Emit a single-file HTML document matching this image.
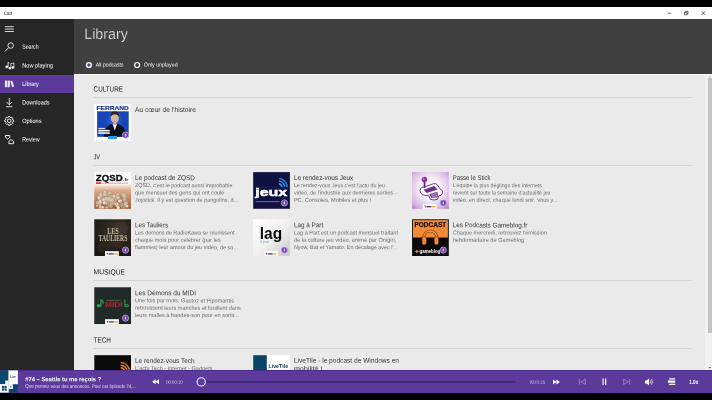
<!DOCTYPE html>
<html><head><meta charset="utf-8"><title>Cast</title>
<style>
*{box-sizing:border-box;margin:0;padding:0}
html,body{width:712px;height:400px;overflow:hidden;background:#000;font-family:"Liberation Sans",sans-serif}
#root{position:absolute;left:0;top:0;width:712px;height:400px;overflow:hidden;will-change:transform}
.a{position:absolute}
.t{position:absolute;left:0;top:0;white-space:nowrap;transform-origin:0 0;display:block}
svg{position:absolute;left:0;top:0;overflow:visible}
svg text{font-family:"Liberation Sans",sans-serif}
</style></head><body>
<div id="root">
<div class="a" style="left:0;top:0;width:712px;height:6.75px;background:#000"></div>
<div class="a" style="left:0;top:6.75px;width:712px;height:12.25px;background:#fff"></div>
<div class="a" id="side" style="left:0;top:19px;width:73.8px;height:352px;background:#262626"></div>
<div class="a" id="sel" style="left:0;top:74.6px;width:73.8px;height:18.5px;background:#5b3a9c"></div>
<div class="a" id="head" style="left:73.8px;top:19px;width:638.2px;height:55.3px;background:#404040"></div>
<div class="a" id="cont" style="left:73.8px;top:74.3px;width:638.2px;height:297px;background:#eaeaea"></div>
<div class="a" style="left:73.8px;top:74.3px;width:638.2px;height:0.8px;background:#f8f8f8"></div>
<!-- separators -->
<div class="a" style="left:93px;top:96.8px;width:599px;height:1px;background:#d4d4d4"></div>
<div class="a" style="left:93px;top:164.7px;width:599px;height:1px;background:#d4d4d4"></div>
<div class="a" style="left:93px;top:279.7px;width:599px;height:1px;background:#d4d4d4"></div>
<div class="a" style="left:93px;top:347.6px;width:599px;height:1px;background:#d4d4d4"></div>
<!-- scrollbar -->
<div class="a" style="left:705px;top:75px;width:7px;height:296px;background:#f1f1f1"></div>
<div class="a" style="left:708px;top:78.4px;width:3.6px;height:254.4px;background:#c3c3c3"></div>

<svg width="712" height="400" viewBox="0 0 712 400" id="g1">
<!-- window controls -->
<g stroke="#333" stroke-width="0.7" fill="none">
<path d="M667.6 13.2H671.4"/>
<path d="M684.4 12.2H687V14.8H684.4Z M685.4 12.2V11.3H688V13.9H687"/>
<path d="M701.6 11.3L705.2 14.9M705.2 11.3L701.6 14.9"/>
</g>
<!-- sidebar icons -->
<g stroke="#f4f4f4" stroke-width="0.85" fill="none" stroke-linecap="butt">
<path d="M4.8 26.7H13.8M4.8 29.1H13.8M4.8 31.5H13.8"/>
<circle cx="10.7" cy="45.5" r="2.75"/>
<path d="M8.7 47.6L5 51.4" stroke-width="1"/>
<!-- music -->
<g stroke-width="0.75">
<path d="M8.1 66.6V62.2L9.4 63.6"/>
<ellipse cx="6.9" cy="66.8" rx="1.25" ry="1" fill="#f4f4f4"/>
<path d="M10.9 68V63.6L13.9 63V67.3"/>
<ellipse cx="9.9" cy="68.2" rx="1.1" ry="0.9" fill="#f4f4f4"/>
<ellipse cx="12.9" cy="67.5" rx="1.1" ry="0.9" fill="#f4f4f4"/>
</g>
<!-- library -->
<g fill="#efe8fa" stroke="none">
<rect x="4.9" y="80.6" width="2.2" height="6.6"/>
<rect x="7.6" y="80.6" width="2.2" height="6.6"/>
<path d="M10.2 81.3L12.1 80.6L14.1 86.6L12.2 87.3Z"/>
</g>
<!-- download -->
<path d="M9.25 98V104.6M6.5 102L9.25 104.8L12 102M6.1 106.7H12.4"/>
<!-- gear -->
<g stroke="#ececec" stroke-width="0.95">
<path d="M8.48,116.36 L9.92,116.36 L10.06,117.30 L11.07,117.72 L11.83,117.15 L12.85,118.17 L12.28,118.93 L12.70,119.94 L13.64,120.08 L13.64,121.52 L12.70,121.66 L12.28,122.67 L12.85,123.43 L11.83,124.45 L11.07,123.88 L10.06,124.30 L9.92,125.24 L8.48,125.24 L8.34,124.30 L7.33,123.88 L6.57,124.45 L5.55,123.43 L6.12,122.67 L5.70,121.66 L4.76,121.52 L4.76,120.08 L5.70,119.94 L6.12,118.93 L5.55,118.17 L6.57,117.15 L7.33,117.72 L8.34,117.30 Z"/>
<circle cx="9.2" cy="120.8" r="1.8"/>
</g>
<!-- review -->
<g stroke-width="0.95" stroke-linejoin="round">
<path d="M5.4 135.5H9.8V137.2L7.8 139.2L5.4 137.2Z"/>
<path d="M8.9 141.4L10.9 139.5L13.6 141.4V143.7H8.9Z"/>
</g>
</g>
<!-- radios -->
<circle cx="88.9" cy="65" r="2.4" fill="#5b3a9c" stroke="#fff" stroke-width="1.4"/>
<circle cx="137.1" cy="65" r="2.5" fill="none" stroke="#fff" stroke-width="1.2"/>
<path d="M708.5 77.3L709.8 75.9L711.1 77.3Z" fill="#a8a8a8"/><path d="M708.5 367L709.8 368.4L711.1 367Z" fill="#5a5a5a"/>
<defs>
<linearGradient id="zq" x1="0" y1="0" x2="0" y2="1"><stop offset="0.3" stop-color="#ffffff"/><stop offset="0.5" stop-color="#dcaa8a"/><stop offset="1" stop-color="#a25a38"/></linearGradient>
<radialGradient id="ps" cx="0.5" cy="0.45" r="0.78"><stop offset="0" stop-color="#ffffff"/><stop offset="0.42" stop-color="#f4eaf7"/><stop offset="0.75" stop-color="#d7b4e2"/><stop offset="1" stop-color="#a468b8"/></radialGradient>
<linearGradient id="lg" x1="0" y1="0" x2="1" y2="1"><stop offset="0" stop-color="#ffffff"/><stop offset="0.5" stop-color="#f1f1f1"/><stop offset="1" stop-color="#c9c9c9"/></linearGradient>
<radialGradient id="tl" cx="0.6" cy="0.35" r="0.7"><stop offset="0" stop-color="#3e3629"/><stop offset="1" stop-color="#191714"/></radialGradient>
<g id="badge"><circle r="3.1" fill="#6b3fa8" stroke="#cdb8ec" stroke-width="0.7"/><rect x="-0.7" y="-1.5" width="1.4" height="3" rx="0.5" fill="#d9c8f0"/></g>
<g id="kawa"><rect x="-0.2" y="-1" width="13.8" height="4.8" fill="#ffffff"/><path d="M1.2 0.6L3 0.9L2.4 2.9Z" fill="#7a2f9a"/><rect x="3.5" y="1" width="5" height="1.4" fill="#5a3a7a"/><rect x="8.9" y="1" width="3.6" height="1.4" fill="#f0b030"/></g>
<radialGradient id="fg" cx="0.5" cy="0.5" r="0.5"><stop offset="0" stop-color="#2f6ae4"/><stop offset="1" stop-color="#1846ba"/></radialGradient>
</defs>
<!-- Ferrand -->
<g transform="translate(94.3,104.3)">
<rect width="36.6" height="36.6" fill="#ffffff"/>
<rect x="2.8" y="7" width="31.6" height="25.5" fill="#1846ba"/>
<circle cx="20" cy="16.5" r="9" fill="url(#fg)"/>
<text x="2.2" y="6" font-size="5" font-weight="bold" fill="#16328e" stroke="#16328e" stroke-width="0.15" textLength="32.2" lengthAdjust="spacingAndGlyphs">FERRAND</text>
<path d="M9.5 32.5Q10.5 22 17.4 19.8L20.5 23.4L23.6 19.8Q31.4 22 32.4 32.5Z" fill="#0e101a"/>
<path d="M18.5 19.6L20.5 26.4L22.6 19.6Z" fill="#f2f3f8"/>
<rect x="18.8" y="16.5" width="3.5" height="4" fill="#c79c86"/>
<ellipse cx="20.5" cy="13.4" rx="4.1" ry="5.3" fill="#dcb49c"/>
<path d="M16.3 12.4Q16.2 7.2 20.5 7.3Q24.9 7.2 24.7 12.4Q23.6 9.8 20.5 9.9Q17.4 9.8 16.3 12.4Z" fill="#2e221c"/>
<path d="M18 16.2Q20.5 18.2 23 16.2Q20.5 19.6 18 16.2Z" fill="#b98a74"/>
<rect x="4" y="23.6" width="6.6" height="1.1" fill="#cfdcf8"/><rect x="4" y="25.6" width="11.4" height="1.6" fill="#f3f6ff"/><rect x="4" y="28" width="11.4" height="1.6" fill="#f3f6ff"/>
<rect x="13.6" y="31.7" width="9.2" height="3.3" rx="1.2" fill="#2a9ae8"/>
<use href="#badge" x="31.2" y="30.8"/>
</g>
<!-- ZQSD -->
<g transform="translate(94.3,172.1)">
<rect width="36.7" height="36.7" fill="url(#zq)"/>
<text x="1.5" y="9.1" font-size="9.6" font-weight="bold" fill="#0a0a0a" stroke="#0a0a0a" stroke-width="0.3" textLength="26.8" lengthAdjust="spacingAndGlyphs">ZQSD</text>
<text x="28.5" y="9.1" font-size="4.2" font-weight="bold" fill="#15254a" textLength="5.8" lengthAdjust="spacingAndGlyphs">.fr</text>
<rect x="1.6" y="10.2" width="5.6" height="1.5" fill="#c8202a"/><rect x="8" y="10.6" width="26" height="0.8" fill="#cf8a80"/>
<g stroke="#7a5238" stroke-width="0.3" stroke-opacity="0.7" opacity="0.92"><ellipse cx="12.4" cy="21.5" rx="1.9" ry="1.3" fill="#e9dcc6"/><ellipse cx="5.4" cy="30.1" rx="2.3" ry="1.5" fill="#e3d8bc"/><ellipse cx="15.7" cy="19.8" rx="1.2" ry="1.9" fill="#e3d8bc"/><ellipse cx="31.4" cy="31.1" rx="1.9" ry="1.3" fill="#a9a68c"/><ellipse cx="4.0" cy="25.8" rx="1.8" ry="1.4" fill="#a9a68c"/><ellipse cx="6.9" cy="22.1" rx="1.5" ry="2.5" fill="#d8cdb0"/><ellipse cx="5.6" cy="30.0" rx="1.3" ry="1.4" fill="#e3d8bc"/><ellipse cx="19.7" cy="29.1" rx="1.7" ry="2.1" fill="#f4eede"/><ellipse cx="16.7" cy="34.2" rx="1.6" ry="1.6" fill="#d8cdb0"/><ellipse cx="23.8" cy="23.4" rx="1.8" ry="2.0" fill="#f4eede"/><ellipse cx="24.7" cy="24.2" rx="2.4" ry="1.4" fill="#a9a68c"/><ellipse cx="7.5" cy="25.4" rx="2.3" ry="1.9" fill="#e3d8bc"/><ellipse cx="25.8" cy="28.9" rx="2.2" ry="1.7" fill="#f4eede"/><ellipse cx="20.6" cy="28.5" rx="1.7" ry="2.5" fill="#c9b79c"/><ellipse cx="17.0" cy="29.8" rx="1.2" ry="2.3" fill="#d6bfa2"/><ellipse cx="11.2" cy="25.5" rx="2.0" ry="1.2" fill="#d6bfa2"/><ellipse cx="13.3" cy="29.0" rx="1.7" ry="1.5" fill="#c9b79c"/><ellipse cx="6.4" cy="24.1" rx="1.6" ry="2.6" fill="#e3d8bc"/><ellipse cx="7.6" cy="26.3" rx="1.5" ry="1.4" fill="#a9a68c"/><ellipse cx="28.9" cy="24.8" rx="1.6" ry="1.8" fill="#a9a68c"/><ellipse cx="31.7" cy="25.4" rx="1.3" ry="1.6" fill="#b9b59a"/><ellipse cx="2.9" cy="33.5" rx="1.3" ry="1.7" fill="#d8cdb0"/><ellipse cx="15.3" cy="24.9" rx="1.8" ry="2.7" fill="#e9dcc6"/><ellipse cx="31.5" cy="31.4" rx="2.1" ry="1.9" fill="#e9dcc6"/><ellipse cx="14.5" cy="25.4" rx="1.2" ry="2.2" fill="#efe6d0"/><ellipse cx="8.3" cy="35.3" rx="1.7" ry="1.4" fill="#efe6d0"/><ellipse cx="5.6" cy="29.9" rx="1.8" ry="2.7" fill="#efe6d0"/><ellipse cx="4.6" cy="25.5" rx="1.6" ry="2.2" fill="#f4eede"/><ellipse cx="20.9" cy="26.8" rx="1.2" ry="2.0" fill="#d6bfa2"/><ellipse cx="17.2" cy="23.8" rx="1.3" ry="2.4" fill="#c9b79c"/><ellipse cx="17.1" cy="30.3" rx="1.8" ry="1.5" fill="#e9dcc6"/><ellipse cx="13.5" cy="30.3" rx="2.3" ry="2.4" fill="#c9b79c"/><ellipse cx="32.3" cy="33.9" rx="2.0" ry="1.6" fill="#f4eede"/><ellipse cx="30.2" cy="27.5" rx="1.4" ry="2.1" fill="#e9dcc6"/><ellipse cx="12.6" cy="22.7" rx="2.2" ry="2.8" fill="#b9b59a"/><ellipse cx="27.1" cy="32.7" rx="2.1" ry="1.6" fill="#e9dcc6"/><ellipse cx="17.5" cy="30.9" rx="2.4" ry="2.5" fill="#d6bfa2"/><ellipse cx="10.4" cy="30.6" rx="2.3" ry="1.9" fill="#f4eede"/><ellipse cx="31.6" cy="27.9" rx="1.4" ry="1.6" fill="#b9b59a"/><ellipse cx="12.8" cy="26.9" rx="2.4" ry="2.2" fill="#efe6d0"/><ellipse cx="17.1" cy="29.6" rx="2.1" ry="1.3" fill="#e3d8bc"/><ellipse cx="30.2" cy="32.8" rx="2.1" ry="2.0" fill="#d8cdb0"/><ellipse cx="15.7" cy="29.3" rx="1.2" ry="2.7" fill="#a9a68c"/><ellipse cx="16.6" cy="31.1" rx="1.2" ry="1.5" fill="#d8cdb0"/><ellipse cx="3.3" cy="30.5" rx="1.7" ry="2.2" fill="#d6bfa2"/><ellipse cx="22.5" cy="24.9" rx="1.8" ry="1.4" fill="#efe6d0"/><ellipse cx="26.9" cy="31.3" rx="1.2" ry="2.4" fill="#d8cdb0"/><ellipse cx="15.7" cy="33.3" rx="2.2" ry="1.5" fill="#c9b79c"/><ellipse cx="9.0" cy="27.6" rx="2.1" ry="1.7" fill="#e9dcc6"/><ellipse cx="15.3" cy="20.8" rx="2.3" ry="1.8" fill="#d6bfa2"/><ellipse cx="22.7" cy="32.5" rx="1.8" ry="2.5" fill="#e9dcc6"/><ellipse cx="6.5" cy="22.7" rx="1.8" ry="2.6" fill="#d8cdb0"/><ellipse cx="21.1" cy="31.8" rx="1.3" ry="1.4" fill="#e3d8bc"/><ellipse cx="19.5" cy="24.2" rx="1.8" ry="2.1" fill="#e3d8bc"/><ellipse cx="29.4" cy="21.7" rx="1.3" ry="1.3" fill="#e3d8bc"/><ellipse cx="18.0" cy="28.1" rx="2.1" ry="2.7" fill="#d6bfa2"/><ellipse cx="12.4" cy="35.1" rx="1.9" ry="1.5" fill="#c9b79c"/><ellipse cx="16.3" cy="27.6" rx="1.7" ry="2.7" fill="#e9dcc6"/><ellipse cx="29.2" cy="34.7" rx="1.4" ry="2.1" fill="#b9b59a"/><ellipse cx="28.1" cy="22.6" rx="1.3" ry="1.9" fill="#e3d8bc"/><ellipse cx="23.0" cy="26.2" rx="1.4" ry="1.7" fill="#e3d8bc"/><ellipse cx="29.9" cy="23.3" rx="2.0" ry="2.3" fill="#d8cdb0"/><ellipse cx="10.2" cy="21.7" rx="1.7" ry="2.4" fill="#e3d8bc"/><ellipse cx="14.6" cy="26.9" rx="2.4" ry="2.5" fill="#d8cdb0"/><ellipse cx="24.0" cy="35.4" rx="1.6" ry="1.9" fill="#f4eede"/><ellipse cx="12.2" cy="30.9" rx="1.1" ry="2.1" fill="#d6bfa2"/><ellipse cx="23.9" cy="25.7" rx="1.8" ry="1.7" fill="#e3d8bc"/><ellipse cx="5.9" cy="34.4" rx="1.4" ry="2.6" fill="#e3d8bc"/><ellipse cx="10.6" cy="20.0" rx="2.1" ry="1.6" fill="#d8cdb0"/><ellipse cx="27.5" cy="33.2" rx="2.0" ry="2.7" fill="#a9a68c"/></g>
</g>
<!-- Jeux -->
<g transform="translate(253.2,172.1)">
<rect width="36.7" height="36.7" fill="#0f1240"/>
<text x="2" y="23.5" font-size="11.2" font-weight="bold" fill="#ffffff" stroke="#ffffff" stroke-width="0.45" textLength="32" lengthAdjust="spacingAndGlyphs">jeux</text>
<g fill="none" stroke="#3a9be8" stroke-width="1.5"><path d="M25.6 11.7A3.5 3.5 0 0 1 28.6 15"/><path d="M25.8 9A6.2 6.2 0 0 1 31.3 15" stroke="#2f8fe0"/><path d="M26 6.4A8.8 8.8 0 0 1 33.9 15" stroke="#2a84d8"/></g>
<rect x="7.5" y="14.9" width="15" height="0.7" fill="#1c2560"/>
<rect x="2.4" y="28.9" width="24" height="1.1" fill="#5a6498"/>
<use href="#badge" x="31.2" y="30.8"/>
</g>
<!-- Passe le stick -->
<g transform="translate(412.1,172.1)">
<rect width="36.7" height="36.7" fill="url(#ps)"/>
<path d="M8 18.5Q8.5 14.5 12.5 14.8L21.5 11.6Q24 11 25.5 13L28.2 17.2Q31.2 18 30.3 21.2Q29.6 24 26.8 23.6L25.4 27.2Q22 28.6 18.2 27.2L16.6 23.2Q8.4 24.2 8 18.5Z" fill="#fdfbfe" stroke="#5e2676" stroke-width="0.9"/>
<path d="M11.5 17.6L22 13.8L25.6 17.4L14.6 21Z" fill="#6e3088"/>
<path d="M17.4 22L25.4 19.6L25.8 25.2L19 26.2Z" fill="#7c3c96"/>
<path d="M19 23.2L24.6 21.6M19.6 25L24.8 23.6" stroke="#f3e8f7" stroke-width="0.6"/>
<rect x="11.6" y="9.6" width="1.7" height="6.4" fill="#5e2676"/>
<circle cx="12.3" cy="7.4" r="2.8" fill="#8a2fa6"/><circle cx="11.5" cy="6.6" r="0.9" fill="#c890da"/>
<use href="#kawa" x="10.9" y="32.9"/>
<use href="#badge" x="31.2" y="30.8"/>
</g>
<!-- Tauliers -->
<g transform="translate(94.3,219.3)">
<rect width="36.7" height="36.7" fill="url(#tl)"/>
<circle cx="27" cy="9" r="7" fill="#4a4232" opacity="0.4"/><circle cx="9" cy="28" r="6" fill="#2a2c22" opacity="0.6"/><circle cx="24" cy="24" r="5" fill="#3a2a20" opacity="0.5"/>
<text x="12.9" y="15.1" font-size="8.4" font-weight="bold" fill="#c9bea4" style="font-family:'Liberation Serif',serif" textLength="11.5" lengthAdjust="spacingAndGlyphs">LES</text>
<text x="4.3" y="21.8" font-size="9" font-weight="bold" fill="#c9bea4" style="font-family:'Liberation Serif',serif" textLength="28.8" lengthAdjust="spacingAndGlyphs">TAULIERS</text>
<use href="#kawa" x="10.9" y="32.9"/>
<use href="#badge" x="31.2" y="30.8"/>
</g>
<!-- Lag -->
<g transform="translate(253.2,219.3)">
<rect width="36.7" height="36.7" fill="url(#lg)"/>
<text x="6.5" y="19.7" font-size="16.4" font-weight="bold" fill="#0c0c0c" textLength="22.4" lengthAdjust="spacingAndGlyphs">lag</text>
<text x="7" y="24.2" font-size="3.4" fill="#8f8f8f">à part</text>
<use href="#kawa" x="10.9" y="32.9"/>
<use href="#badge" x="31.2" y="30.8"/>
</g>
<!-- Gameblog -->
<g transform="translate(412.1,219.3)">
<rect width="36.7" height="36.7" fill="#0c0a08"/>
<rect x="0.9" y="0.9" width="34.9" height="17.3" fill="#f28b38"/>
<text x="2.3" y="7.6" font-size="6.4" font-weight="bold" fill="#241006" stroke="#241006" stroke-width="0.25" textLength="31.8" lengthAdjust="spacingAndGlyphs">PODCAST</text>
<path d="M11.7 22V18.2A6.5 6.5 0 0 1 24.7 18.2V22" fill="none" stroke="#8a3c0c" stroke-width="2.6"/>
<path d="M11.7 22V18.2A6.5 6.5 0 0 1 24.7 18.2V22" fill="none" stroke="#f59a48" stroke-width="1.3"/>
<rect x="10" y="17.4" width="4.2" height="8" rx="1.7" fill="#f28b38" stroke="#6a2c08" stroke-width="0.6"/>
<rect x="22.2" y="17.4" width="4.2" height="8" rx="1.7" fill="#f28b38" stroke="#6a2c08" stroke-width="0.6"/>
<path d="M3.2 32.2H6.4M4.8 30.6V33.8" stroke="#f28b38" stroke-width="1.2"/>
<text x="7.4" y="34.2" font-size="5.4" font-weight="bold" fill="#ffffff" textLength="20.8" lengthAdjust="spacingAndGlyphs">gameblog</text>
<use href="#badge" x="31.2" y="30.8"/>
</g>
<!-- MIDI -->
<g transform="translate(94.3,287.3)">
<rect width="36.7" height="36.7" fill="#1d2523"/>
<rect x="0.8" y="0.8" width="35.1" height="35.1" fill="#202a27"/>
<text x="10.7" y="19.7" font-size="7.6" font-weight="bold" fill="#b83432" stroke="#6a1c1c" stroke-width="0.3" textLength="17.6" lengthAdjust="spacingAndGlyphs">MIDI</text>
<rect x="12" y="12.6" width="14.5" height="0.8" fill="#56705e"/>
<g fill="#2f9550"><rect x="6" y="11.8" width="1.2" height="7"/><ellipse cx="4.6" cy="18.4" rx="2.3" ry="1.6"/><path d="M7.2 11.8Q9.8 13.2 9.4 16.6L8.2 16.4Q8.6 14.6 7.2 14Z"/>
<rect x="30" y="12" width="1.1" height="7.4"/><ellipse cx="32.4" cy="18.3" rx="2.3" ry="1.7"/><ellipse cx="32.4" cy="18.3" rx="1" ry="0.6" fill="#202a27"/></g>
<use href="#kawa" x="10.9" y="32.9"/>
<use href="#badge" x="31.2" y="30.8"/>
</g>
<!-- RDV Tech -->
<g transform="translate(94.3,355.2)">
<rect width="36.7" height="36.7" fill="#0b0b0b"/>
<g fill="none" stroke="#f08a1e" stroke-width="1.5"><path d="M26.4 12.6A3.7 3.7 0 0 1 30.1 16.3"/><path d="M26.4 10A6.3 6.3 0 0 1 32.7 16.3" stroke="#e9821a"/><path d="M26.4 7.4A8.9 8.9 0 0 1 35.3 16.3" stroke="#d9720f"/></g>
<text x="2.4" y="19.4" font-size="5" font-weight="bold" fill="#e8e8e8">rendez-</text>
</g>
<!-- LiveTile -->
<g transform="translate(253.2,355.2)">
<rect width="36.7" height="36.7" fill="#ffffff"/>
<rect width="13.6" height="36.7" fill="#0c4468"/>
<text x="15.2" y="13.1" font-size="4.8" font-weight="bold" fill="#123a5a" textLength="19.8" lengthAdjust="spacingAndGlyphs">LiveTile</text>
</g>

</svg>
<span class="t" style="font-size:5.0px;line-height:6.25px;color:#111;transform:translate(3.90px,9.97px) rotate(0.1deg) scaleX(0.7878)">Cast</span><span class="t" style="font-size:6.2px;line-height:7.75px;color:#ffffff;transform:translate(22.20px,42.82px) rotate(0.1deg) scaleX(0.8363)">Search</span><span class="t" style="font-size:6.2px;line-height:7.75px;color:#ffffff;transform:translate(22.20px,61.42px) rotate(0.1deg) scaleX(0.9134)">Now playing</span><span class="t" style="font-size:6.2px;line-height:7.75px;color:#ffffff;transform:translate(22.20px,79.92px) rotate(0.1deg) scaleX(0.8746)">Library</span><span class="t" style="font-size:6.2px;line-height:7.75px;color:#ffffff;transform:translate(22.20px,98.42px) rotate(0.1deg) scaleX(0.8947)">Downloads</span><span class="t" style="font-size:6.2px;line-height:7.75px;color:#ffffff;transform:translate(22.20px,117.02px) rotate(0.1deg) scaleX(0.9049)">Options</span><span class="t" style="font-size:6.2px;line-height:7.75px;color:#ffffff;transform:translate(22.20px,135.52px) rotate(0.1deg) scaleX(0.8523)">Review</span><span class="t" style="font-size:15.0px;line-height:18.75px;color:#ffffff;transform:translate(84.30px,24.90px) rotate(0.1deg) scaleX(0.9507);-webkit-text-stroke:0.32px #404040">Library</span><span class="t" style="font-size:5.6px;line-height:7.0px;color:#f4f4f4;transform:translate(95.80px,61.49px) rotate(0.1deg) scaleX(0.9181)">All podcasts</span><span class="t" style="font-size:5.6px;line-height:7.0px;color:#f4f4f4;transform:translate(143.80px,61.49px) rotate(0.1deg) scaleX(0.9450)">Only unplayed</span><span class="t" style="font-size:7.4px;line-height:9.25px;color:#161616;transform:translate(93.60px,84.46px) rotate(0.1deg) scaleX(0.8528)">CULTURE</span><span class="t" style="font-size:7.4px;line-height:9.25px;color:#161616;transform:translate(93.60px,152.36px) rotate(0.1deg) scaleX(0.7420)">JV</span><span class="t" style="font-size:7.4px;line-height:9.25px;color:#161616;transform:translate(93.60px,267.36px) rotate(0.1deg) scaleX(0.9101)">MUSIQUE</span><span class="t" style="font-size:7.4px;line-height:9.25px;color:#161616;transform:translate(93.60px,335.46px) rotate(0.1deg) scaleX(0.8646)">TECH</span><span class="t" style="font-size:6.9px;line-height:8.62px;color:#343434;transform:translate(135.00px,105.93px) rotate(0.1deg) scaleX(0.9685)">Au cœur de l&#x27;histoire</span><span class="t" style="font-size:6.9px;line-height:8.62px;color:#343434;transform:translate(135.00px,174.03px) rotate(0.1deg) scaleX(0.9323)">Le podcast de ZQSD</span><span class="t" style="font-size:5.6px;line-height:7.0px;color:#6c6c6c;transform:translate(135.00px,182.09px) rotate(0.1deg) scaleX(0.9665)">ZQSD, c&#x27;est le podcast aussi improbable</span><span class="t" style="font-size:5.6px;line-height:7.0px;color:#6c6c6c;transform:translate(135.00px,189.39px) rotate(0.1deg) scaleX(0.9991)">que mensuel des gens qui ont coulé</span><span class="t" style="font-size:5.6px;line-height:7.0px;color:#6c6c6c;transform:translate(135.00px,196.69px) rotate(0.1deg) scaleX(0.9714)">Joystick. Il y est question de pangolins, d...</span><span class="t" style="font-size:6.9px;line-height:8.62px;color:#343434;transform:translate(293.90px,174.03px) rotate(0.1deg) scaleX(0.9278)">Le rendez-vous Jeux</span><span class="t" style="font-size:5.6px;line-height:7.0px;color:#6c6c6c;transform:translate(293.90px,182.09px) rotate(0.1deg) scaleX(0.9485)">Le rendez-vous Jeux c&#x27;est l&#x27;actu du jeu</span><span class="t" style="font-size:5.6px;line-height:7.0px;color:#6c6c6c;transform:translate(293.90px,189.39px) rotate(0.1deg) scaleX(0.9787)">vidéo, de l&#x27;industrie aux dernières sorties –</span><span class="t" style="font-size:5.6px;line-height:7.0px;color:#6c6c6c;transform:translate(293.90px,196.69px) rotate(0.1deg) scaleX(0.9951)">PC, Consoles, Mobiles et plus !</span><span class="t" style="font-size:6.9px;line-height:8.62px;color:#343434;transform:translate(452.70px,174.03px) rotate(0.1deg) scaleX(0.8734)">Passe le Stick</span><span class="t" style="font-size:5.6px;line-height:7.0px;color:#6c6c6c;transform:translate(452.70px,182.09px) rotate(0.1deg) scaleX(0.9400)">L&#x27;équipe la plus déglingo des internets</span><span class="t" style="font-size:5.6px;line-height:7.0px;color:#6c6c6c;transform:translate(452.70px,189.39px) rotate(0.1deg) scaleX(0.9376)">revient sur toute la semaine d&#x27;actualité jeu</span><span class="t" style="font-size:5.6px;line-height:7.0px;color:#6c6c6c;transform:translate(452.70px,196.69px) rotate(0.1deg) scaleX(0.9777)">vidéo, en direct, chaque lundi soir. Vous y...</span><span class="t" style="font-size:6.9px;line-height:8.62px;color:#343434;transform:translate(135.00px,221.33px) rotate(0.1deg) scaleX(0.9003)">Les Tauliers</span><span class="t" style="font-size:5.6px;line-height:7.0px;color:#6c6c6c;transform:translate(135.00px,229.39px) rotate(0.1deg) scaleX(0.9637)">Les démons de RadioKawa se réunissent</span><span class="t" style="font-size:5.6px;line-height:7.0px;color:#6c6c6c;transform:translate(135.00px,236.69px) rotate(0.1deg) scaleX(0.9920)">chaque mois pour célébrer (par les</span><span class="t" style="font-size:5.6px;line-height:7.0px;color:#6c6c6c;transform:translate(135.00px,243.99px) rotate(0.1deg) scaleX(0.9859)">flammes) leur amour du jeu vidéo, de so...</span><span class="t" style="font-size:6.9px;line-height:8.62px;color:#343434;transform:translate(293.90px,221.33px) rotate(0.1deg) scaleX(0.9230)">Lag à Part</span><span class="t" style="font-size:5.6px;line-height:7.0px;color:#6c6c6c;transform:translate(293.90px,229.39px) rotate(0.1deg) scaleX(0.9904)">Lag à Part est un podcast mensuel traitant</span><span class="t" style="font-size:5.6px;line-height:7.0px;color:#6c6c6c;transform:translate(293.90px,236.69px) rotate(0.1deg) scaleX(1.0065)">de la culture jeu vidéo, animé par Onigiri,</span><span class="t" style="font-size:5.6px;line-height:7.0px;color:#6c6c6c;transform:translate(293.90px,243.99px) rotate(0.1deg) scaleX(0.9654)">Nyow, Bat et Yamato. En décalage avec l&#x27;...</span><span class="t" style="font-size:6.9px;line-height:8.62px;color:#343434;transform:translate(452.70px,221.33px) rotate(0.1deg) scaleX(0.9211)">Les Podcasts Gameblog.fr</span><span class="t" style="font-size:5.6px;line-height:7.0px;color:#6c6c6c;transform:translate(452.70px,229.39px) rotate(0.1deg) scaleX(0.9897)">Chaque mercredi, retrouvez l&#x27;émission</span><span class="t" style="font-size:5.6px;line-height:7.0px;color:#6c6c6c;transform:translate(452.70px,236.69px) rotate(0.1deg) scaleX(1.0091)">hebdomadaire de Gameblog</span><span class="t" style="font-size:6.9px;line-height:8.62px;color:#343434;transform:translate(135.00px,289.23px) rotate(0.1deg) scaleX(0.9423)">Les Démons du MIDI</span><span class="t" style="font-size:5.6px;line-height:7.0px;color:#6c6c6c;transform:translate(135.00px,297.29px) rotate(0.1deg) scaleX(0.9888)">Une fois par mois, Gautoz et Pipomantis</span><span class="t" style="font-size:5.6px;line-height:7.0px;color:#6c6c6c;transform:translate(135.00px,304.59px) rotate(0.1deg) scaleX(0.9915)">retroussent leurs manches et fouillent dans</span><span class="t" style="font-size:5.6px;line-height:7.0px;color:#6c6c6c;transform:translate(135.00px,311.89px) rotate(0.1deg) scaleX(0.9984)">leurs malles à bandes-son pour en sortir...</span><span class="t" style="font-size:6.9px;line-height:8.62px;color:#343434;transform:translate(135.00px,357.03px) rotate(0.1deg) scaleX(0.9335)">Le rendez-vous Tech</span><span class="t" style="font-size:5.6px;line-height:7.0px;color:#6c6c6c;transform:translate(135.00px,365.09px) rotate(0.1deg) scaleX(0.9926)">L&#x27;actu Tech - Internet - Gadgets</span><span class="t" style="font-size:6.9px;line-height:8.62px;color:#343434;transform:translate(293.90px,356.68px) rotate(0.1deg) scaleX(0.9549)">LiveTile - le podcast de Windows en</span><span class="t" style="font-size:6.9px;line-height:8.62px;color:#343434;transform:translate(293.90px,365.08px) rotate(0.1deg) scaleX(1.0371)">mobilité !</span>
<div class="a" style="left:73.8px;top:369.6px;width:638.2px;height:1px;background:#f6f3fb"></div><div class="a" id="player" style="left:0;top:370.4px;width:712px;height:22.2px;background:#5b3a9c"></div><div class="a" style="left:0;top:370.4px;width:712px;height:0.9px;background:#4a2d8a"></div>
<svg width="712" height="400" viewBox="0 0 712 400" id="g2">
<!-- now playing thumbnail -->
<g>
<rect x="0" y="370.4" width="17.9" height="22.2" fill="#0b466c"/>
<rect x="8.4" y="370.4" width="9.5" height="13.8" fill="#ffffff"/>
<rect x="5.25" y="380.6" width="3.3" height="3.6" fill="#f6f8fb"/>
<rect x="0" y="384.1" width="8.75" height="8.5" fill="#ffffff"/>
<rect x="8.7" y="384.1" width="4.25" height="4.9" fill="#f4f7fa"/>
<text x="9.9" y="378.3" font-size="2.8" font-weight="bold" fill="#3a566e" textLength="6.2" lengthAdjust="spacingAndGlyphs">Live</text>
<rect x="10.4" y="385.6" width="0.9" height="1.8" fill="#2a4a66"/>
<g fill="#0b466c"><rect x="2" y="385.9" width="2.15" height="2.2"/><rect x="4.5" y="385.9" width="2.15" height="2.2"/><rect x="2" y="388.45" width="2.15" height="2.2"/><rect x="4.5" y="388.45" width="2.15" height="2.2"/></g>
</g>
<!-- track -->
<rect x="205.6" y="381.15" width="310" height="1.5" fill="#3d2377"/>
<circle cx="201.2" cy="381.9" r="4.1" fill="#5b3a9c" stroke="#f3ecff" stroke-width="1.1"/>
<!-- rewind -->
<g fill="#ffffff"><path d="M155.6 379.3V384.3L152.1 381.8Z"/><path d="M159 379.3V384.3L155.5 381.8Z"/></g>
<!-- ff -->
<g fill="#ffffff"><path d="M553 379.4V384.4L556.5 381.9Z"/><path d="M556.4 379.4V384.4L559.9 381.9Z"/></g>
<!-- prev -->
<g fill="none" stroke="#a893d3" stroke-width="0.75"><path d="M579.4 379V384.6"/><path d="M585.4 379.2V384.4L581 381.8Z"/></g>
<!-- pause -->
<g fill="#ffffff"><rect x="602.5" y="378.5" width="1.15" height="6.4"/><rect x="605.1" y="378.5" width="1.15" height="6.4"/></g>
<!-- next -->
<g fill="none" stroke="#a893d3" stroke-width="0.75"><path d="M629.6 379V384.6"/><path d="M623.7 379.2V384.4L628.1 381.8Z"/></g>
<!-- volume -->
<g fill="#ffffff"><path d="M645 380.4H646.7L649 378.6V385.2L646.7 383.4H645Z"/></g>
<g fill="none" stroke="#ffffff" stroke-width="0.7"><path d="M650.2 380.2Q651.3 381.9 650.2 383.6"/><path d="M651.5 379Q653.6 381.9 651.5 384.8"/></g>
<!-- list -->
<g fill="#ffffff"><rect x="669.2" y="378.2" width="6" height="1.3"/><rect x="667.9" y="380.5" width="7.3" height="2.2"/><rect x="669.2" y="383.7" width="6" height="1.3"/></g>

</svg>
<span class="t" style="font-size:6.2px;line-height:7.75px;color:#ffffff;transform:translate(25.30px,375.22px) rotate(0.1deg) scaleX(0.9351);font-weight:bold">#74 – Seattle tu me reçois ?</span><span class="t" style="font-size:5.2px;line-height:6.5px;color:#e4daf6;transform:translate(25.30px,382.84px) rotate(0.1deg) scaleX(0.8587)">Que pensez-vous des annonces. Pour cet épisode 74,...</span><span class="t" style="font-size:4.8px;line-height:6.0px;color:#d9ccf2;transform:translate(166.20px,379.69px) rotate(0.1deg) scaleX(0.8829)">00:00:10</span><span class="t" style="font-size:4.8px;line-height:6.0px;color:#d9ccf2;transform:translate(529.70px,379.69px) rotate(0.1deg) scaleX(0.8348)">02:01:15</span><span class="t" style="font-size:6.2px;line-height:7.75px;color:#ffffff;transform:translate(689.20px,377.92px) rotate(0.1deg) scaleX(0.7554);font-weight:bold">1.0x</span>
<div class="a" style="left:0;top:392.6px;width:712px;height:7.4px;background:#000"></div>
</div>
</body></html>
